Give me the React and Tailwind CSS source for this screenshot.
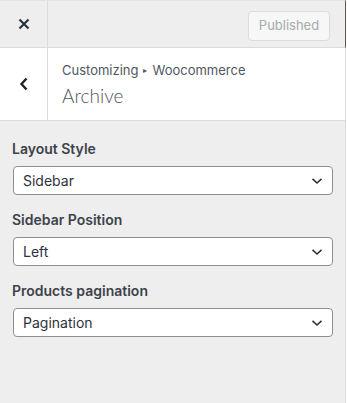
import React from "react";

function Chevron() {
  return (
    <svg width="12" height="8" viewBox="0 0 12 8" className="shrink-0">
      <path d="M1.5 1.8 L6 6 L10.5 1.8" fill="none" stroke="#2c3338" strokeWidth="1.6" />
    </svg>
  );
}

function Field({ label, value, first }) {
  return (
    <div className={first ? "" : "mt-[15px]"}>
      <div className="h-[20px] leading-[20px] text-[14px] font-semibold text-[#3c434a] pl-[12px]">{label}</div>
      <div className="mt-[7px] ml-[13px] w-[320px] h-[29px] bg-white border border-[#8c8f94] rounded-[4px] flex items-center justify-between pl-[9px] pr-[9px]">
        <span className="text-[14px] text-[#2c3338]">{value}</span>
        <Chevron />
      </div>
    </div>
  );
}

export default function App() {
  return (
    <div
      className="w-[347px] h-[403px] bg-white flex overflow-hidden"
      style={{ fontFamily: "Inter, 'Noto Sans', sans-serif" }}
    >
      <div className="w-[346px] h-full flex flex-col bg-[#eeeeee] border-r border-[#dcdcde]">
        <div className="h-[48px] flex border-t border-t-[#e4e4e4] border-b border-[#dcdcde] bg-[#eeeeee] border-r border-r-[#5d564b] -mr-px">
          <div className="w-[48px] h-full border-r border-[#dcdcde] flex items-center justify-center">
            <svg width="12" height="12" viewBox="0 0 12 12">
              <path d="M1.5 1.5 L10.5 10.5 M10.5 1.5 L1.5 10.5" stroke="#2c3338" strokeWidth="2.2" strokeLinecap="butt" />
            </svg>
          </div>
          <div className="flex-1 flex items-center justify-end pr-[15px] pt-[3px]">
            <div className="w-[82px] h-[30px] border border-[#dcdcde] rounded-[4px] bg-[#f6f7f7] flex items-center justify-center text-[13px] text-[#a7aaad]">
              Published
            </div>
          </div>
        </div>
        <div className="h-[73px] flex bg-white border-b border-[#dcdcde]">
          <div className="w-[48px] h-full border-r border-[#dcdcde] flex items-center justify-center">
            <svg width="10" height="14" viewBox="0 0 10 14">
              <path d="M7.5 1.5 L2.5 7 L7.5 12.5" fill="none" stroke="#1d2327" strokeWidth="2.4" />
            </svg>
          </div>
          <div className="flex-1 pl-[14px] pt-[13px]">
            <div className="text-[13px] leading-[18px] text-[#50575e] flex items-center">
              <span>Customizing</span>
              <span className="text-[8px] mx-[5px]">▸</span>
              <span>Woocommerce</span>
            </div>
            <div
              className="text-[19px] leading-[26px] font-light text-[#50575e] mt-[4px]"
              style={{ fontFamily: "Lato, Inter, sans-serif", fontWeight: 300 }}
            >
              Archive
            </div>
          </div>
        </div>
        <div className="pt-[18px]">
          <Field first label="Layout Style" value="Sidebar" />
          <Field label="Sidebar Position" value="Left" />
          <Field label="Products pagination" value="Pagination" />
        </div>
      </div>
    </div>
  );
}
